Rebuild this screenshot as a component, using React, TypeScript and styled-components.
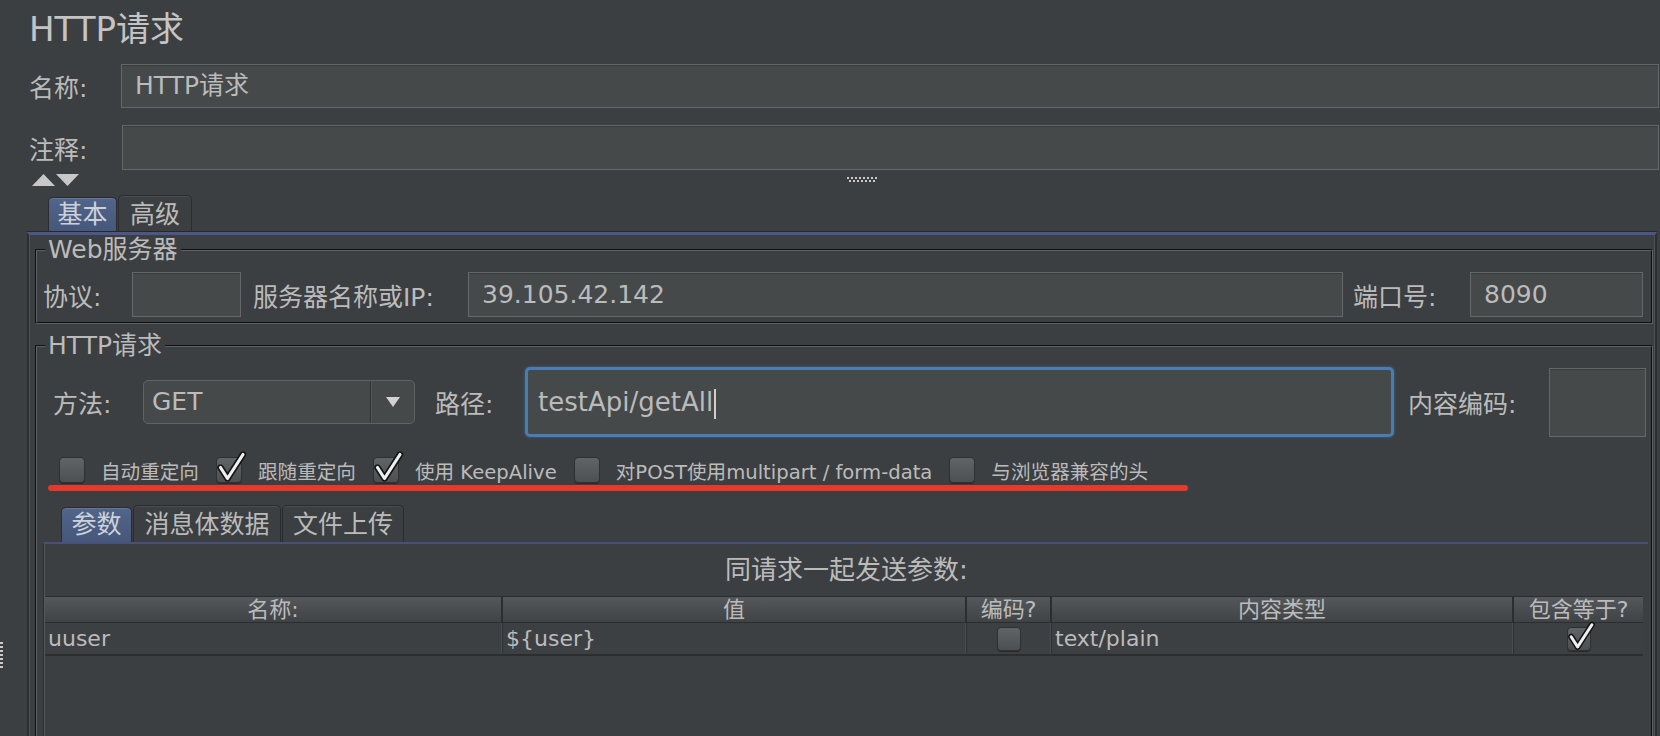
import React from 'react'
import styled, { createGlobalStyle } from 'styled-components'

const GlobalStyle = createGlobalStyle`
  html, body {
    margin: 0;
    padding: 0;
    background: #3c3f41;
  }
  body {
    font-family: "DejaVu Sans", "Noto Sans CJK SC", sans-serif;
    color: #bbbbbb;
  }
  * {
    box-sizing: border-box;
  }
`

const Check: React.FC<{ checked?: boolean; size?: number }> = ({ checked, size = 26 }) => (
  <Box $size={size}>
    {checked && (
      <Tick width={size} height={size} viewBox="0 0 26 26">
        <path d="M4.5 10.5 L11.5 21.5 L27 -2.5" fill="none" stroke="#141414" strokeWidth="6.4" strokeLinejoin="round" strokeLinecap="round" />
        <path d="M4.5 10.5 L11.5 21.5 L27 -2.5" fill="none" stroke="#efefef" strokeWidth="3.2" strokeLinejoin="round" strokeLinecap="round" />
      </Tick>
    )}
  </Box>
)

const CheckItem: React.FC<{ label: string; checked?: boolean }> = ({ label, checked }) => (
  <CheckOption>
    <Check checked={checked} />
    <CheckText>{label}</CheckText>
  </CheckOption>
)

const App: React.FC = () => {
  return (
    <Root>
      <GlobalStyle />
      <Gutter>
        <svg width="4" height="27" viewBox="0 0 4 27">
          {[0, 4, 8, 12, 16, 20, 24].map((y) => (
            <rect key={y} x="0" y={y} width="3" height="2" fill="#c8c8c8" />
          ))}
        </svg>
      </Gutter>
      <Main>
        <Header>
          <Title>HTTP请求</Title>
          <FormRow $h={44} $mt={6}>
            <FieldLabel $w={92}>名称:</FieldLabel>
            <TextBox $h={44}>HTTP请求</TextBox>
          </FormRow>
          <FormRow $h={45} $mt={17}>
            <FieldLabel $w={93}>注释:</FieldLabel>
            <TextBox $h={45} />
          </FormRow>
          <ArrowRow>
            <svg width="47" height="12" viewBox="0 0 47 12">
              <polygon points="0,12 11.5,0 23,12" fill="#c8c8c8" />
              <polygon points="24,0 47,0 35.5,12" fill="#c8c8c8" />
            </svg>
            <Grip>
              <svg width="30" height="7" viewBox="0 0 30 7">
                {[0, 4, 8, 12, 16, 20, 24, 28].map((x) => (
                  <React.Fragment key={x}>
                    <rect x={x} y="1" width="2" height="2" fill="#c8c8c8" />
                    <rect x={x + 2} y="4" width="2" height="2" fill="#c8c8c8" />
                  </React.Fragment>
                ))}
              </svg>
            </Grip>
          </ArrowRow>
        </Header>

        <TabStrip $pl={48}>
          <Tab $active $w={69}>基本</Tab>
          <Tab $w={74}>高级</Tab>
        </TabStrip>

        <TabPanel>
          <Group>
            <Legend>Web服务器</Legend>
            <FormRow $h={45}>
              <FieldLabel $w={89}>协议:</FieldLabel>
              <TextBox $h={45} $w={109} />
              <FieldLabel $w={215} $ml={12}>服务器名称或IP:</FieldLabel>
              <TextBox $h={45}>39.105.42.142</TextBox>
              <FieldLabel $w={117} $ml={10}>端口号:</FieldLabel>
              <TextBox $h={45} $w={173}>8090</TextBox>
            </FormRow>
          </Group>

          <RequestGroup>
            <Legend>HTTP请求</Legend>
            <FormRow $h={70} $pl={10} $pr={2}>
              <FieldLabel $w={90}>方法:</FieldLabel>
              <Select>
                <SelectValue>GET</SelectValue>
                <SelectButton>
                  <svg width="14" height="10" viewBox="0 0 14 10">
                    <polygon points="0,0 14,0 7,10" fill="#d2d2d2" />
                  </svg>
                </SelectButton>
              </Select>
              <FieldLabel $w={90} $ml={20}>路径:</FieldLabel>
              <TextBox $h={70} $focus>
                testApi/getAll<Caret />
              </TextBox>
              <FieldLabel $w={141} $ml={14}>内容编码:</FieldLabel>
              <TextBox $h={69} $w={97} />
            </FormRow>

            <CheckRow>
              <CheckItem label="自动重定向" />
              <CheckItem label="跟随重定向" checked />
              <CheckItem label="使用 KeepAlive" checked />
              <CheckItem label="对POST使用multipart / form-data" />
              <CheckItem label="与浏览器兼容的头" />
            </CheckRow>
            <Underline />

            <TabStrip $pl={18} $mt={14}>
              <Tab $active $w={71}>参数</Tab>
              <Tab $w={148}>消息体数据</Tab>
              <Tab $w={122}>文件上传</Tab>
            </TabStrip>

            <ParamsPanel>
              <Caption>同请求一起发送参数:</Caption>
              <Table>
                <HeadCell>名称:</HeadCell>
                <HeadCell>值</HeadCell>
                <HeadCell>编码?</HeadCell>
                <HeadCell>内容类型</HeadCell>
                <HeadCell $last>包含等于?</HeadCell>
                <Cell>uuser</Cell>
                <Cell>{'${user}'}</Cell>
                <Cell $center>
                  <Check size={24} />
                </Cell>
                <Cell>text/plain</Cell>
                <Cell $center $last>
                  <Check size={24} checked />
                </Cell>
              </Table>
            </ParamsPanel>
          </RequestGroup>
        </TabPanel>
      </Main>
    </Root>
  )
}

export default App

const Root = styled.div`
  display: flex;
  width: 1660px;
  height: 736px;
  overflow: hidden;
  background: #3c3f41;
`

const Gutter = styled.div`
  flex: 0 0 4px;
  margin-right: -4px;
  padding-top: 642px;
`

const Main = styled.div`
  flex: 1;
  min-width: 0;
  display: flex;
  flex-direction: column;
`

const Header = styled.div`
  padding: 0 1px 0 29px;
`

const Title = styled.div`
  height: 58px;
  font-size: 34px;
  line-height: 58px;
  color: #c4c4c4;
`

const FormRow = styled.div<{ $h: number; $mt?: number; $pl?: number; $pr?: number }>`
  display: flex;
  align-items: center;
  height: ${(p) => p.$h}px;
  margin-top: ${(p) => p.$mt ?? 0}px;
  padding-left: ${(p) => p.$pl ?? 0}px;
  padding-right: ${(p) => p.$pr ?? 0}px;
`

const FieldLabel = styled.label<{ $w: number; $ml?: number }>`
  flex: 0 0 ${(p) => p.$w}px;
  margin-left: ${(p) => p.$ml ?? 0}px;
  font-size: 25px;
  white-space: nowrap;
`

const TextBox = styled.div<{ $w?: number; $h: number; $focus?: boolean }>`
  flex: ${(p) => (p.$w ? `0 0 ${p.$w}px` : '1 1 0')};
  min-width: 0;
  height: ${(p) => p.$h}px;
  background: #45494a;
  border: ${(p) => (p.$focus ? '3px solid #4a7cb1' : '1px solid #65686a')};
  border-radius: ${(p) => (p.$focus ? '5px' : '0')};
  box-shadow: ${(p) => (p.$focus ? '0 0 3px #3d6a99' : 'inset 0 1px 0 #37393a')};
  padding-left: ${(p) => (p.$focus ? 10 : 13)}px;
  font-size: ${(p) => (p.$focus ? 26 : 25)}px;
  line-height: ${(p) => p.$h - (p.$focus ? 6 : 2)}px;
  white-space: nowrap;
  overflow: hidden;
`

const Caret = styled.span`
  display: inline-block;
  width: 2px;
  height: 30px;
  margin-left: 1px;
  vertical-align: middle;
  background: #cfcfcf;
`

const ArrowRow = styled.div`
  display: flex;
  align-items: flex-start;
  height: 25px;
  padding: 4px 0 0 3px;
`

const Grip = styled.div`
  margin: 2px 0 0 768px;
  line-height: 0;
`

const TabStrip = styled.div<{ $pl: number; $mt?: number }>`
  display: flex;
  align-items: flex-end;
  gap: 1px;
  height: 37px;
  margin-top: ${(p) => p.$mt ?? 0}px;
  padding-left: ${(p) => p.$pl}px;
`

const Tab = styled.div<{ $active?: boolean; $w: number }>`
  width: ${(p) => p.$w}px;
  height: ${(p) => (p.$active ? 35 : 37)}px;
  font-size: 25px;
  line-height: ${(p) => (p.$active ? 34 : 37)}px;
  text-align: center;
  white-space: nowrap;
  color: ${(p) => (p.$active ? '#cdd2da' : '#bbbbbb')};
  border: 1px solid #2a2c2d;
  border-bottom: none;
  border-radius: 5px 5px 0 0;
  background: ${(p) => (p.$active ? 'linear-gradient(#52658a, #45577a)' : '#3c3f41')};
  box-shadow: inset 0 1px 0 ${(p) => (p.$active ? '#64779c' : '#4a4d4f')};
`

const TabPanel = styled.div`
  flex: 1;
  display: flex;
  flex-direction: column;
  margin: 0 3px 0 27px;
  padding: 2px 2px 0 6px;
  border-top: 3px solid #4d5686;
  border-left: 2px solid #2c2e2f;
  border-right: 2px solid #2c2e2f;
  box-shadow: 0 -1px 0 #26282a, inset 1px 0 0 #505355, inset -1px 0 0 #505355;
`

const Group = styled.fieldset`
  margin: 0;
  min-width: 0;
  padding: 9px 8px 5px 6px;
  border: 2px groove #5f6264;
`

const RequestGroup = styled(Group)`
  flex: 1;
  margin-top: 9px;
  padding: 8px 3px 0 6px;
  border-bottom: none;
`

const Legend = styled.legend`
  margin-left: 2px;
  padding: 0 3px;
  font-size: 25px;
  line-height: 26px;
  white-space: nowrap;
`

const Select = styled.div`
  flex: 0 0 272px;
  display: flex;
  height: 44px;
  border: 1px solid #606365;
  border-radius: 5px;
  background: #45494a;
  overflow: hidden;
`

const SelectValue = styled.div`
  flex: 1;
  padding-left: 8px;
  font-size: 25px;
  line-height: 42px;
`

const SelectButton = styled.div`
  flex: 0 0 44px;
  display: flex;
  align-items: center;
  justify-content: center;
  border-left: 1px solid #2f3133;
  box-shadow: inset 1px 0 0 #55585a;
`

const CheckRow = styled.div`
  display: flex;
  align-items: center;
  gap: 17px;
  height: 26px;
  margin-top: 20px;
  padding-left: 16px;
`

const CheckOption = styled.div`
  display: flex;
  align-items: center;
  gap: 16px;
`

const CheckText = styled.span`
  font-size: 19.6px;
  white-space: nowrap;
`

const Box = styled.span<{ $size: number }>`
  position: relative;
  flex: 0 0 ${(p) => p.$size}px;
  display: inline-block;
  width: ${(p) => p.$size}px;
  height: ${(p) => p.$size}px;
  border-radius: 4px;
  border: 1px solid #2e3032;
  background: linear-gradient(#616466, #4d5052);
  box-shadow: 0 1px 0 #2a2b2c;
`

const Tick = styled.svg`
  position: absolute;
  left: -1px;
  top: -1px;
  overflow: visible;
`

const Underline = styled.div`
  width: 1140px;
  height: 6px;
  margin: 2px 0 0 5px;
  border-radius: 3px;
  background: #e5392b;
`

const ParamsPanel = styled.div`
  height: 260px;
  border-top: 2px solid #4a5175;
  border-left: 1px solid #2b2d2e;
  box-shadow: inset 1px 0 0 #56595b;
  padding-left: 1px;
`

const Caption = styled.div`
  height: 52px;
  font-size: 26px;
  line-height: 52px;
  text-align: center;
`

const Table = styled.div`
  display: grid;
  grid-template-columns: 458px 464px 85px 462px 129px;
  grid-template-rows: 27px 33px;
`

const HeadCell = styled.div<{ $last?: boolean }>`
  font-size: 22px;
  line-height: 26px;
  text-align: center;
  white-space: nowrap;
  background: linear-gradient(#55585b, #404345);
  border-top: 1px solid #2b2d2e;
  border-bottom: 1px solid #2b2d2e;
  border-right: ${(p) => (p.$last ? 'none' : '2px solid #2b2d2e')};
`

const Cell = styled.div<{ $center?: boolean; $last?: boolean }>`
  display: flex;
  align-items: center;
  justify-content: ${(p) => (p.$center ? 'center' : 'flex-start')};
  padding-left: ${(p) => (p.$center ? 0 : 3)}px;
  font-size: 22px;
  white-space: nowrap;
  background: #3d4042;
  border-bottom: 2px solid #2b2d2e;
  border-right: ${(p) => (p.$last ? 'none' : '1px solid #2e3032')};
  box-shadow: ${(p) => (p.$last ? 'none' : 'inset -1px 0 0 #4a4d4f')};
`
